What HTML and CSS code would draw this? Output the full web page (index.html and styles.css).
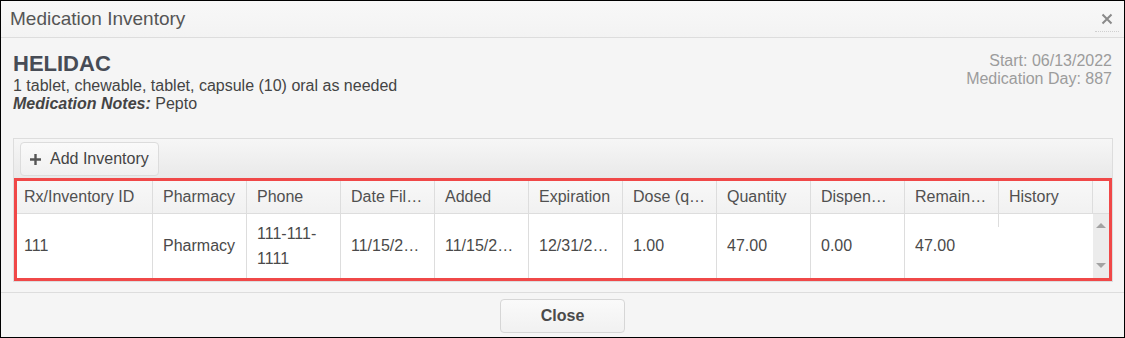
FILE: index.html
```html
<!DOCTYPE html>
<html lang="en">
  <head>
    <meta charset="UTF-8" />
    <title>Medication Inventory</title>
    <link rel="stylesheet" href="styles.css">
  </head>
  <body>
    <div class="dialog">
      <div class="dialog-title">
        <span>Medication Inventory</span>
        <button class="close-x" title="Close">
          <svg width="12" height="12" viewBox="0 0 12 12"><path d="M1.5 1.5 L10.5 10.5 M10.5 1.5 L1.5 10.5" stroke="#8a8a8a" stroke-width="2" /></svg>
        </button>
      </div>

      <div class="dialog-body">
        <div class="med-info">
          <div class="med-main">
            <h2>HELIDAC</h2>
            <div>1 tablet, chewable, tablet, capsule (10) oral as needed</div>
            <div><b><i>Medication Notes:</i></b> Pepto</div>
          </div>
          <div class="med-dates">
            <div>Start: 06/13/2022</div>
            <div>Medication Day: 887</div>
          </div>
        </div>

        <div class="grid-panel">
          <div class="grid-toolbar">
            <button class="tool-btn">
              <svg width="13" height="13" viewBox="0 0 13 13"><path d="M6.5 1 V12 M1 6.5 H12" stroke="#555" stroke-width="2.4" /></svg>
              Add Inventory
            </button>
          </div>

          <div class="grid-frame">
            <div class="grid-head">
              <div class="cell">Rx/Inventory ID</div>
              <div class="cell">Pharmacy</div>
              <div class="cell">Phone</div>
              <div class="cell">Date Filled</div>
              <div class="cell">Added</div>
              <div class="cell">Expiration</div>
              <div class="cell">Dose (qty)</div>
              <div class="cell">Quantity</div>
              <div class="cell">Dispensed</div>
              <div class="cell">Remaining</div>
              <div class="cell">History</div>
              <div class="cell gutter"></div>
            </div>
            <div class="grid-row">
              <div class="cell">111</div>
              <div class="cell">Pharmacy</div>
              <div class="cell wrap">111-111-1111</div>
              <div class="cell">11/15/2024</div>
              <div class="cell">11/15/2024</div>
              <div class="cell">12/31/2025</div>
              <div class="cell">1.00</div>
              <div class="cell">47.00</div>
              <div class="cell">0.00</div>
              <div class="cell no-line">47.00</div>
              <div class="cell history"></div>
              <div class="scrollbar">
                <span class="arrow up"></span>
                <span class="arrow down"></span>
              </div>
            </div>
          </div>
        </div>
      </div>

      <div class="dialog-footer">
        <button class="btn-close">Close</button>
      </div>
    </div>
  </body>
</html>
```

FILE: styles.css
```css
body {
  margin: 0;
  font-family: "Liberation Sans", Arial, sans-serif;
  color: #444;
  background-color: #fff;
}
.dialog {
  width: 1125px;
  height: 338px;
  box-sizing: border-box;
  border: 1px solid #000;
  background-color: #f5f5f5;
  display: flex;
  flex-direction: column;
}
.dialog-title {
  height: 36px;
  border-bottom: 1px solid #ddd;
  background: linear-gradient(#f8f8f8, #f3f3f3);
  display: flex;
  align-items: center;
  justify-content: space-between;
  padding: 0 9px;
  font-size: 19px;
  color: #555;
}
.close-x {
  border: none;
  border-bottom: 1px dotted #cfcfcf;
  background: none;
  padding: 3px 6px 6px;
  margin-right: -4px;
  margin-top: 4px;
  display: flex;
}
.dialog-body {
  padding: 13px 12px 10px 12px;
}
.med-info {
  display: flex;
  justify-content: space-between;
  height: 87px;
  font-size: 16px;
  line-height: 18px;
}
.med-main h2 {
  margin: 0;
  font-size: 22px;
  line-height: 26px;
  color: #474c55;
}
.med-dates {
  text-align: right;
  color: #9c9c9c;
  padding-top: 1px;
}
.grid-panel {
  border: 1px solid #ddd;
  margin-right: -1px;
}
.grid-toolbar {
  height: 39px;
  box-sizing: border-box;
  padding: 3px 6px 2px;
  background: linear-gradient(#f6f6f6, #e9e9e9);
}
.tool-btn {
  height: 34px;
  padding: 0 9px 0 8px;
  border: 1px solid #dcdcdc;
  border-radius: 4px;
  background: linear-gradient(#fafafa, #f0f0f0);
  font-family: inherit;
  font-size: 16px;
  color: #444;
  display: flex;
  align-items: center;
  gap: 8px;
}
.grid-frame {
  border: 3px solid #f04848;
  background: #fff;
}
.grid-head,
.grid-row {
  display: grid;
  grid-template-columns: 136px repeat(10, 94px) 1fr;
}
.grid-head {
  height: 33px;
  box-sizing: border-box;
  border-bottom: 1px solid #ddd;
  background: linear-gradient(#f8f8f8, #f1f1f1);
}
.grid-row {
  height: 64px;
}
.cell {
  border-right: 1px solid #ddd;
  padding: 0 10px;
  font-size: 16px;
  color: #4a4a4a;
  white-space: nowrap;
  overflow: hidden;
  text-overflow: ellipsis;
}
.grid-head .cell {
  line-height: 32px;
  color: #505050;
}
.grid-row .cell {
  line-height: 64px;
}
.grid-head .cell:first-child,
.grid-row .cell:first-child {
  padding-left: 7px;
}
.cell.gutter {
  border-right: none;
}
.grid-row .cell.wrap {
  white-space: normal;
  line-height: 25px;
  padding-top: 7px;
}
.cell.no-line {
  border-right: none;
}
.grid-row .cell.history {
  align-self: start;
  height: 13px;
  border-left: 1px solid #ddd;
  border-right: none;
  margin-left: -1px;
}
.scrollbar {
  background-color: #ececec;
  display: flex;
  flex-direction: column;
  justify-content: space-between;
  align-items: center;
  padding: 9px 0 10px;
}
.arrow {
  width: 0;
  height: 0;
  border-left: 5px solid transparent;
  border-right: 5px solid transparent;
}
.arrow.up {
  border-bottom: 5px solid #a3a3a3;
}
.arrow.down {
  border-top: 5px solid #a3a3a3;
}
.dialog-footer {
  flex: 1;
  border-top: 1px solid #ddd;
  display: flex;
  justify-content: center;
  align-items: flex-start;
  padding-top: 6px;
}
.btn-close {
  width: 125px;
  height: 34px;
  border: 1px solid #d6d6d6;
  border-radius: 4px;
  background: linear-gradient(#fafafa, #f1f1f1);
  font-family: inherit;
  font-size: 16px;
  font-weight: bold;
  color: #4a4a4a;
}
```
